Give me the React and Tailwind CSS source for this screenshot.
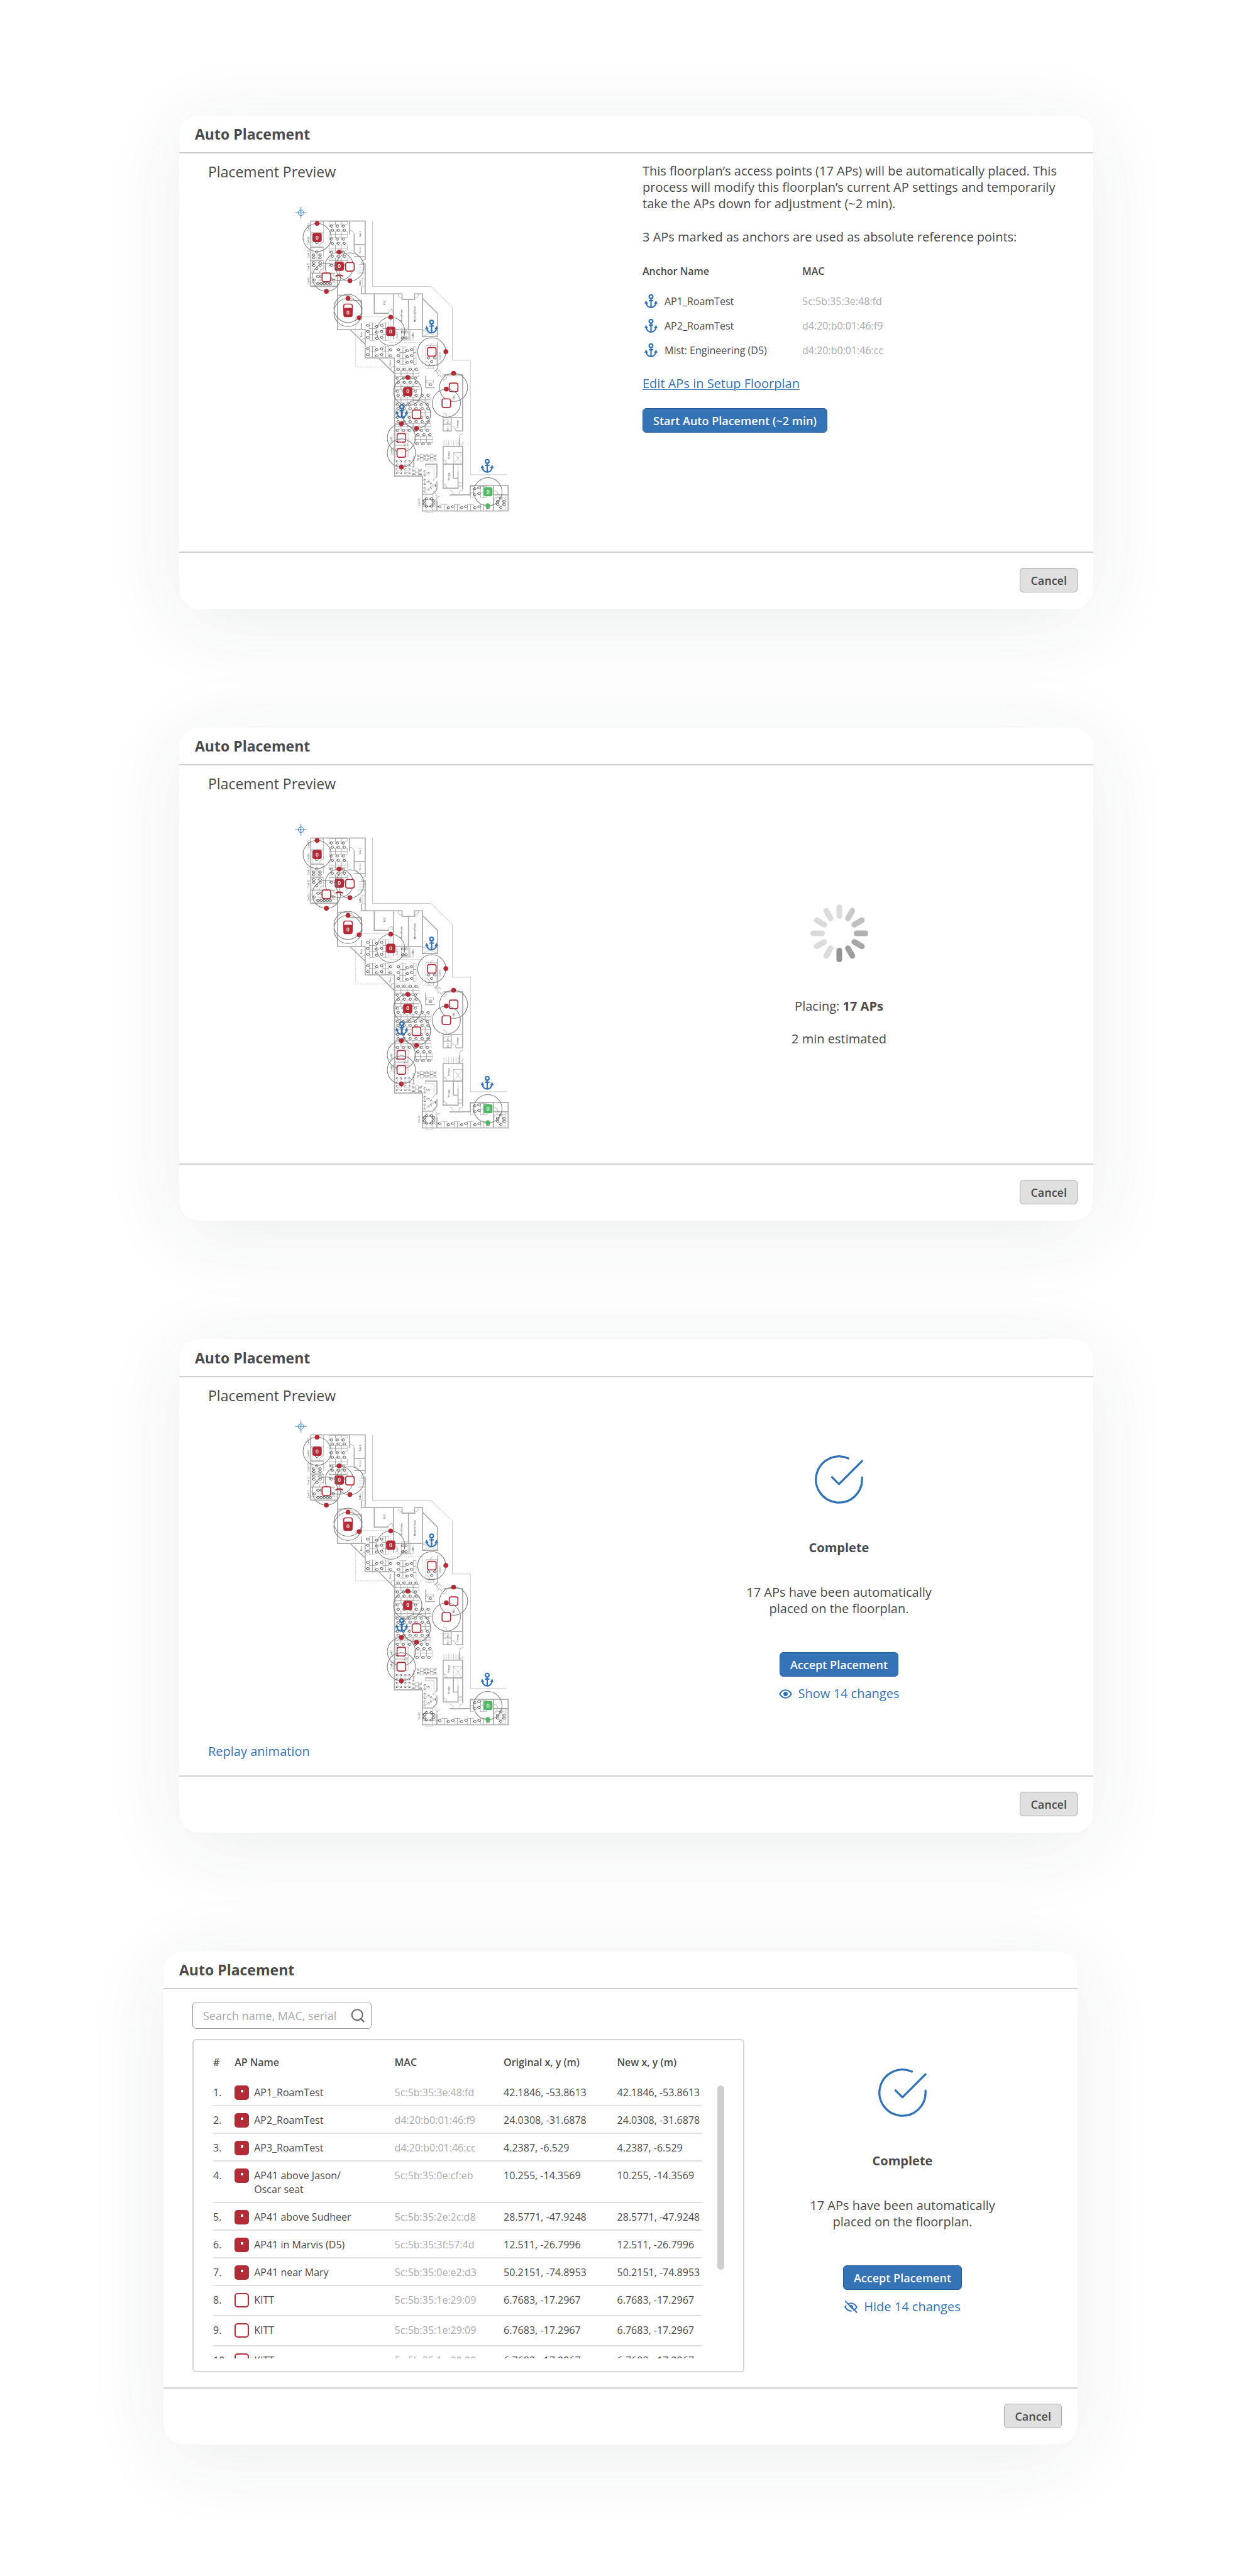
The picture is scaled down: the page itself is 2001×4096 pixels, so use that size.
import React from "react";

/* ------------------------------------------------------------------ */
/* Icons                                                               */
/* ------------------------------------------------------------------ */

function AnchorShape() {
  return (
    <g stroke="#3273b8" fill="none" strokeWidth="8">
      <circle cx="0" cy="-26" r="10.5" />
      <path d="M0 -15 V36 M-13 -3 H13" />
      <path d="M-28 10 C-26 26 -14 36 0 36 C14 36 26 26 28 10" />
      <path d="M-29 -5 L-38 14 H-17 Z M29 -5 L38 14 H17 Z" fill="#3273b8" stroke="none" />
    </g>
  );
}

function AnchorIcon() {
  return (
    <svg viewBox="-38 -40 76 80" className="h-[22px] w-[21px] shrink-0" aria-hidden="true">
      <AnchorShape />
    </svg>
  );
}

function CheckCircle() {
  return (
    <svg
      viewBox="1.5 1.5 21 21"
      className="size-[77px]"
      fill="none"
      stroke="#3273b8"
      strokeWidth="0.9"
      strokeLinecap="round"
      strokeLinejoin="round"
      aria-hidden="true"
    >
      <path d="M22 11.08V12a10 10 0 1 1-5.93-9.14" />
      <path d="M22 4 12 14.01l-3-3" />
    </svg>
  );
}

const EYE_PATH = "M1.4 9 C4.5 4 8.5 1.4 13 1.4 S21.5 4 24.6 9 C21.5 14 17.5 16.6 13 16.6 S4.5 14 1.4 9 Z";

function EyeIcon() {
  return (
    <svg viewBox="0 0 26 18" className="h-[15px] w-[21px]" fill="none" stroke="#3273b8" strokeWidth="2.5" aria-hidden="true">
      <path d={EYE_PATH} />
      <circle cx="13" cy="9" r="4.2" fill="#3273b8" stroke="none" />
    </svg>
  );
}

function EyeOffIcon() {
  return (
    <svg viewBox="0 0 26 25" className="h-[20px] w-[21px]" fill="none" stroke="#3273b8" strokeWidth="2.5" aria-hidden="true">
      <g transform="translate(0 4)">
        <path d={EYE_PATH} />
        <circle cx="13" cy="9" r="4.4" fill="#3273b8" stroke="none" />
      </g>
      <path d="M0 3.5 L22 26" stroke="#fff" strokeWidth="3" />
      <path d="M2 1.4 L24.6 23.6" strokeLinecap="round" />
    </svg>
  );
}

function SearchIcon() {
  return (
    <svg viewBox="0 0 27 27" className="size-[22px]" fill="none" stroke="#6b6b6b" strokeWidth="2.6" aria-hidden="true">
      <circle cx="12.5" cy="12" r="10.5" />
      <path d="M18.5 18.5 L26 26" strokeWidth="3" />
    </svg>
  );
}

const SPOKES = [
  "#dcdcdc", "#c9c9c9", "#bfbfbf", "#b0b0b0", "#a7a7a7", "#9e9e9e",
  "#949494", "#dcdcdc", "#dcdcdc", "#dadada", "#dadada", "#dcdcdc",
];

function Spinner() {
  return (
    <svg viewBox="-56 -56 112 112" className="size-[92px]" strokeWidth="11" strokeLinecap="round" role="img" aria-label="Placing access points">
      {SPOKES.map((color, i) => (
        <path key={i} d="M0 -50.5 V-33.5" stroke={color} transform={`rotate(${i * 30})`} />
      ))}
    </svg>
  );
}

/* ------------------------------------------------------------------ */
/* Floorplan drawing                                                   */
/* ------------------------------------------------------------------ */

const WALLS = [
  "M190 152 H507 V378 M507 398 V576 M485 398 H507 M190 152 V533 H346 M346 460 V785 H507 V950 H678 V1638 H840 V1841 H1340 V1693 H1120 V1747 H1000",
  "M485 535 V576 H722 V608 H795 V576 H841 V825 H929 V690 L841 603 M560 576 V690 H643 M673 576 V840 M759 610 V785 M673 785 H840",
  "M420 785 L507 870 M586 950 L678 1042 M346 585 H417 M417 615 H486 V720 M486 745 V782",
  "M416 152 V230 M443 228 V335 M443 290 H505 M443 360 H505 M190 304 H262 M190 380 H262 M190 456 H330",
  "M965 1048 H1075 V1375 M961 1298 H1075 M961 1298 V1375 H1008 V1298 M1035 1375 H1075 M961 1335 H1008",
  "M1057 1415 V1462 M961 1465 H1075 V1715 M961 1465 V1568 H1075 M961 1568 V1708 H1048 V1612 M1021 1568 V1650 H1048",
  "M1000 1747 H1075 M857 1568 H925 V1645 M925 1670 V1715 L900 1743 H840 M925 1780 V1841 M1255 1693 V1841 M1255 1747 H1340",
  "M930 855 V1010 L912 1028 M860 1053 V1123 H913",
];

const THIN = [
  "M550 152 V533 H890 L1015 656 V963 H1120 V1630 H1333",
  "M264 152 V275 M264 300 V360 M264 380 V440 M197 220 V300 M197 310 V370 M197 385 V450 M190 218 H262 M190 224 H262 M240 158 H264",
  "M190 380 H262 M226 340 V400 M205 380 H250 M186 456 V530 M190 510 H346 M186 483 H200 M190 527 H346",
  "M470 405 H505 M470 421 H505 M470 437 H505 M470 451 H505 M462 458 H505 M490 485 H505 V535 H490 Z",
  "M841 788 L929 824 M841 824 L929 788 M841 788 H929",
  "M718 775 H758 V845 H718 Z M765 785 H772 V845 H765 Z M690 846 H790 M860 878 H925 V990 H860 Z M860 995 H905 V1012 H860 Z M865 1080 H905 V1095 H865 Z M875 995 V1012 M890 995 V1012",
  "M1021 1500 H1075 V1568 H1021 Z M1021 1500 L1075 1568 M1075 1500 L1021 1568",
  "M966 1428 V1462 M980 1428 V1462 M994 1428 V1462 M1008 1428 V1462 M1022 1428 V1462 M1036 1428 V1462 M1050 1428 V1462",
  "M1050 1675 H1075 M1050 1683 H1075 M1050 1691 H1075 M1050 1699 H1075 M1048 1568 V1612",
  "M681 1388 H757 V1458 H681 Z M681 1458 H757 V1525 H681 Z M740 1388 V1440 M690 1475 H740 V1515 H690 Z M735 1450 H757 M735 1458 H757",
  "M857 1568 V1585 H908 V1640 M862 1745 V1850 H898 V1745 M845 1775 H915 V1815 H845 Z M915 1750 H925 V1820 H915",
  "M1325 1750 V1835 M1270 1765 H1325 M1280 1835 H1325 M670 1480 H690 M670 1465 V1520",
];

const DOORS = [
  "M420 207 a24 24 0 0 1 23 24 M264 275 a22 22 0 0 0 -22 22 M264 430 a22 22 0 0 0 -22 25 M507 378 a22 22 0 0 0 -22 20 M443 335 a22 22 0 0 1 20 22",
  "M643 690 a22 22 0 0 1 22 -22 V690 M700 580 a22 22 0 0 0 22 22 M818 580 a22 22 0 0 1 -22 22 M507 835 a22 22 0 0 0 -22 22 M678 998 a22 22 0 0 0 -22 22",
  "M319 456 a22 22 0 0 0 22 22 M417 590 a24 24 0 0 1 24 22 M905 862 a22 22 0 0 0 -18 20 M861 970 a22 22 0 0 1 22 22",
  "M915 1018 l12 18 q15 -32 18 -2 M938 1045 l14 18 q14 -30 18 0 M922 1038 q20 10 6 22 M961 1078 a22 22 0 0 0 22 -20 M961 1270 a22 22 0 0 1 22 22 M961 1328 a20 20 0 0 1 20 -20",
  "M1015 1350 a22 22 0 0 1 20 24 M1057 1412 a22 22 0 0 1 20 -22 M961 1545 a22 22 0 0 1 22 22 M961 1685 a22 22 0 0 1 22 22 M1000 1720 a24 24 0 0 1 20 24 M1053 1740 a22 22 0 0 1 22 -20",
  "M925 1645 a22 22 0 0 0 -22 22 M905 1730 l18 14 M920 1768 l20 -14 M1258 1722 a22 22 0 0 1 22 22 M1258 1780 a22 22 0 0 1 22 -22 M1057 1458 a22 22 0 0 0 20 -20 M735 1455 a22 22 0 0 0 22 22",
];

/* x, y, columns, rows, cell width, cell height */
const DESKS = [
  [298, 155, 3, 1, 35, 17], [298, 214, 3, 2, 35, 17], [298, 292, 3, 2, 35, 17], [298, 367, 3, 2, 35, 17],
  [532, 745, 2, 3, 17, 34], [610, 745, 2, 3, 17, 34], [532, 881, 2, 2, 17, 34], [610, 881, 2, 2, 17, 34],
  [709, 885, 2, 3, 18, 34], [787, 885, 1, 3, 17, 34],
  [681, 1024, 4, 2, 35, 17], [681, 1100, 4, 2, 35, 17], [681, 1177, 6, 2, 35, 17], [681, 1253, 6, 2, 35, 17],
  [681, 1331, 6, 2, 35, 17], [795, 1407, 3, 2, 35, 17],
  [950, 1804, 2, 1, 17, 36], [1026, 1804, 2, 1, 17, 36], [1103, 1804, 2, 1, 17, 36], [1180, 1804, 2, 1, 17, 36],
  [1120, 1697, 1, 2, 17, 34], [1180, 1697, 2, 2, 17, 34],
  [828, 1510, 1, 1, 17, 40], [886, 1510, 1, 1, 17, 40], [800, 1595, 1, 1, 17, 40],
];

/* first x, y, count, step */
const CHAIR_ROWS = [
  [310, 182, 3, 35], [316, 205, 3, 35], [310, 258, 3, 35], [316, 282, 3, 35], [310, 334, 3, 35], [316, 358, 3, 35], [310, 410, 3, 35],
  [233, 475, 2, 18], [233, 517, 5, 18], [211, 496, 1, 0], [322, 496, 1, 0],
  [208, 350, 2, 37], [208, 367, 2, 37], [208, 394, 2, 37], [208, 411, 2, 37], [226, 332, 1, 0], [226, 430, 1, 0], [226, 278, 1, 0],
  [523, 760, 2, 80], [523, 795, 2, 80], [523, 830, 2, 80], [575, 766, 1, 0], [575, 800, 1, 0], [575, 835, 1, 0],
  [523, 896, 2, 80], [523, 931, 2, 80], [575, 902, 2, 80], [575, 937, 2, 80],
  [701, 902, 2, 77], [701, 936, 2, 77], [701, 971, 2, 77], [753, 907, 1, 0], [753, 942, 1, 0], [753, 976, 1, 0],
  [727, 798, 2, 18], [727, 833, 2, 18], [877, 950, 2, 36], [895, 971, 1, 0], [888, 1106, 1, 0],
  [700, 1015, 4, 35], [695, 1068, 4, 35], [700, 1091, 4, 35], [695, 1144, 4, 35], [700, 1168, 6, 35], [695, 1221, 6, 35],
  [700, 1244, 6, 35], [695, 1297, 6, 35], [700, 1320, 6, 35], [695, 1373, 6, 35], [815, 1397, 3, 35], [810, 1450, 3, 35],
  [941, 1816, 4, 77], [993, 1822, 4, 77], [1146, 1712, 1, 0], [1171, 1706, 1, 0], [1146, 1746, 1, 0], [1171, 1740, 1, 0],
  [1298, 1765, 1, 0], [1298, 1820, 1, 0], [1280, 1785, 2, 36], [1280, 1802, 2, 36],
  [697, 1437, 2, 34],
  [865, 1770, 2, 28], [853, 1782, 2, 52], [853, 1800, 2, 52], [865, 1813, 2, 28],
];

const CHAIRS = CHAIR_ROWS.flatMap(([x, y, n, step]) => Array.from({ length: n }, (_, i) => [x + i * step, y]));
const BREAK_TABLES = [[703, 1564], [753, 1564], [703, 1610], [753, 1610]];
const LOUNGE_TABLES = [[863, 1622], [863, 1672], [900, 1693], [863, 1717]];
const SIDE_CHAIRS = [[836, 1530], [894, 1530], [808, 1615]];

const ROOM_LABELS = [
  [175, 190, "Conf 15"], [175, 266, "Conf 14"], [175, 342, "Conf 13"], [175, 418, "Conf 12"], [175, 498, "Conf 11"],
  [476, 228, "Lab 1"], [476, 320, "Server"], [476, 513, "Coffee"], [619, 627, "NOC"], [719, 703, "Mens Room"],
  [795, 695, "Womens Room"], [485, 814, "Patio"], [652, 978, "Patio"], [692, 817, "Conf 7"], [786, 818, "Coffee"],
  [943, 938, "Conf 6"], [1021, 1178, "EBC"], [991, 1318, "Ph 2"], [991, 1358, "Ph 1"], [1046, 1335, "Storage"],
  [995, 1515, "Storage"], [995, 1640, "Storage"], [660, 1427, "Conf 5"], [660, 1497, "Conf 4"], [790, 1555, "Break Area"],
  [820, 1790, "Conf 3"],
];

/* kind, x, y, beam dot x, beam dot y */
const ACCESS_POINTS = [
  ["off", 227, 248, 227, 166],
  ["off", 356, 416, 356, 333],
  ["none", 418, 419, 418, 500],
  ["none", 281, 480, 281, 562],
  ["none", 407, 661, 472, 716],
  ["off", 407, 685, 407, 603],
  ["off", 656, 795, 656, 712],
  ["none", 895, 914, 977, 913],
  ["none", 1022, 1121, 1022, 1039],
  ["none", 980, 1213, 980, 1131],
  ["off", 755, 1145, 755, 1063],
  ["none", 806, 1278, 806, 1360],
  ["none", 718, 1415, 718, 1333],
  ["none", 718, 1503, 718, 1585],
  ["on", 1222, 1729, 1222, 1810],
];

const MAP_ANCHORS = [[894, 767], [720, 1260], [1218, 1578]];

function AccessPoint({ kind, x, y, dx, dy }) {
  const color = kind === "on" ? "#56b866" : "#b42b38";
  return (
    <g>
      <circle cx={x} cy={y} r="82" fill="none" stroke="#7c7c7c" strokeWidth="3.8" />
      {kind === "none" ? (
        <rect x={x - 25} y={y - 25} width="50" height="50" rx="11" fill="#fff" stroke={color} strokeWidth="6" />
      ) : (
        <g>
          <rect x={x - 27} y={y - 27} width="54" height="54" rx="13" fill={color} />
          <text x={x} y={y + 11} fontSize="31" fontWeight="600" textAnchor="middle" fill="#fff">0</text>
        </g>
      )}
      <circle cx={dx} cy={dy} r="14" fill={color} />
    </g>
  );
}

function Floorplan() {
  return (
    <svg viewBox="90 30 1260 1860" className="h-[508px] w-[344px]" role="img" aria-label="Floorplan with access points">
      <g fill="none">
        <g stroke="#8c8c8c" strokeWidth="1.8">
          {THIN.map((d) => <path key={d} d={d} />)}
          {DESKS.map(([x, y, cols, rows, w, h]) => (
            <g key={`${x}-${y}`}>
              {Array.from({ length: cols * rows }, (_, i) => (
                <rect key={i} x={x + (i % cols) * w} y={y + Math.floor(i / cols) * h} width={w} height={h} />
              ))}
            </g>
          ))}
          {DOORS.map((d) => <path key={d} d={d} stroke="#5f5f5f" />)}
        </g>
        <g stroke="#979797" strokeWidth="5.5">
          {WALLS.map((d) => <path key={d} d={d} />)}
        </g>
        <g stroke="#cfcfcf" strokeWidth="1.6">
          {WALLS.map((d) => <path key={d} d={d} />)}
        </g>
        <path d="M452 710 H657 V860 H841 V1003 H452 Z" stroke="#9a9a9a" strokeWidth="2" strokeDasharray="8 5" />
        <g stroke="#2f2f2f" strokeWidth="2.6">
          {CHAIRS.map(([x, y]) => (
            <path key={`${x}-${y}`} d={`M${x - 5} ${y - 6} h9 l4 6 l-4 6 h-8 l-3 -6 Z M${x - 9} ${y - 4} v8`} />
          ))}
        </g>
        <g stroke="#444" strokeWidth="2">
          <path d="M233 496 H262 M226 348 h1 M226 364 h1 M284 1793 h1" />
          {BREAK_TABLES.map(([x, y]) => (
            <g key={`${x}-${y}`}>
              <rect x={x - 8} y={y - 8} width="16" height="16" stroke="#999" />
              <path d={`M${x - 15} ${y - 6} V${y - 15} H${x - 6} M${x + 6} ${y - 15} H${x + 15} V${y - 6} M${x - 15} ${y + 6} V${y + 15} H${x - 6} M${x + 6} ${y + 15} H${x + 15} V${y + 6}`} strokeWidth="3" />
            </g>
          ))}
          {LOUNGE_TABLES.map(([x, y]) => (
            <g key={`${x}-${y}`}>
              <path d={`M${x - 10} ${y - 10} L${x + 12} ${y} L${x - 10} ${y + 10} Z`} stroke="#888" />
              <path d={`M${x - 16} ${y - 8} l4 -7 h8 M${x - 16} ${y + 8} l4 7 h8 M${x + 16} ${y - 7} v14 M${x + 11} ${y - 4} h6`} strokeWidth="2.6" />
            </g>
          ))}
          {SIDE_CHAIRS.map(([x, y]) => (
            <path
              key={`${x}-${y}`}
              d={`M${x - 12} ${y - 13} h-15 v-6 M${x - 12} ${y - 7} h-15 M${x - 12} ${y + 13} h-15 v6 M${x - 12} ${y + 7} h-15 M${x + 12} ${y - 13} h15 v-6 M${x + 12} ${y - 7} h15 M${x + 12} ${y + 13} h15 v6 M${x + 12} ${y + 7} h15 M${x - 9} ${y} h18`}
              strokeWidth="2.4"
            />
          ))}
          <ellipse cx="1298" cy="1793" rx="13" ry="22" stroke="#888" />
        </g>
        <g stroke="#3c7fc4" strokeWidth="3.6">
          <circle cx="133" cy="104" r="16" />
          <path d="M133 70 V138 M99 104 H167" />
        </g>
      </g>

      <g fill="#3a3a3a" fontSize="13.5" textAnchor="middle" className="font-['Liberation_Sans',sans-serif]">
        {ROOM_LABELS.map(([x, y, label]) => (
          <text key={`${x}-${y}`} transform={`translate(${x + 5} ${y}) rotate(-90)`}>{label}</text>
        ))}
      </g>

      {ACCESS_POINTS.map(([kind, x, y, dx, dy]) => (
        <AccessPoint key={`${x}-${y}`} kind={kind} x={x} y={y} dx={dx} dy={dy} />
      ))}
      <path d="M335 473 Q356 463 378 473" fill="none" stroke="#b42b38" strokeWidth="8" />

      {MAP_ANCHORS.map(([x, y]) => (
        <g key={`${x}-${y}`} transform={`translate(${x} ${y})`}>
          <AnchorShape />
        </g>
      ))}
    </svg>
  );
}

/* ------------------------------------------------------------------ */
/* Shared pieces                                                       */
/* ------------------------------------------------------------------ */

function Dialog({ className = "", columns = "grid-cols-[737fr_717fr]", children }) {
  return (
    <section className={`flex flex-col rounded-[32px] bg-white shadow-[0_20px_128px_rgba(30,50,60,0.09)] ${className}`}>
      <header className="flex h-[60px] items-center border-b-2 border-[#cfcfcf] px-[25px]">
        <h1 className="text-[23px] leading-8 font-bold">Auto Placement</h1>
      </header>
      <div className={`grid min-h-[633px] ${columns}`}>{children}</div>
      <footer className="flex justify-end border-t-2 border-[#cfcfcf] px-[25px] pt-6 pb-[26px]">
        <button type="button" className="h-[39px] rounded-md border border-[#aaaaaa] bg-[#e0e0e0] px-4 text-[18px] leading-6 font-semibold">
          Cancel
        </button>
      </footer>
    </section>
  );
}

function Preview({ gap, children }) {
  return (
    <div className="flex flex-col items-start pt-[13px] pb-[25px] pl-[46px]">
      <h2 className="text-[23px] leading-8">Placement Preview</h2>
      <div className={`pl-[136px] ${gap}`}>
        <Floorplan />
      </div>
      {children}
    </div>
  );
}

function PrimaryButton({ children }) {
  return (
    <button type="button" className="h-[39px] rounded-md border border-[#245c97] bg-[#3573b7] px-4 text-[18px] leading-6 font-semibold text-white">
      {children}
    </button>
  );
}

function CompleteStatus({ className, icon, toggle }) {
  return (
    <div className={`flex flex-col items-center text-center text-[20px] leading-[26px] ${className}`}>
      <CheckCircle />
      <h2 className="mt-[57px] font-bold">Complete</h2>
      <p className="mt-[45px] mb-14">
        17 APs have been automatically
        <br />
        placed on the floorplan.
      </p>
      <PrimaryButton>Accept Placement</PrimaryButton>
      <button type="button" className="mt-[14px] flex items-center gap-[10px] text-[#3273b8]">
        {icon}
        {toggle}
      </button>
    </div>
  );
}

/* ------------------------------------------------------------------ */
/* Dialog bodies                                                       */
/* ------------------------------------------------------------------ */

const ANCHORS = [
  ["AP1_RoamTest", "5c:5b:35:3e:48:fd"],
  ["AP2_RoamTest", "d4:20:b0:01:46:f9"],
  ["Mist: Engineering (D5)", "d4:20:b0:01:46:cc"],
];

function StartPanel() {
  return (
    <div className="flex flex-col items-start pt-[15px] pr-[52px] text-[20px] leading-[26px]">
      <p>
        This floorplan’s access points (17 APs) will be automatically placed. This process will modify this floorplan’s
        current AP settings and temporarily take the APs down for adjustment (~2 min).
      </p>
      <p className="mt-[27px]">3 APs marked as anchors are used as absolute reference points:</p>
      <table className="mt-[30px] text-left text-[16px] leading-[22px]">
        <thead>
          <tr>
            <th scope="col" className="w-[254px] pb-[17px] font-semibold">Anchor Name</th>
            <th scope="col" className="pb-[17px] font-semibold">MAC</th>
          </tr>
        </thead>
        <tbody>
          {ANCHORS.map(([name, mac]) => (
            <tr key={mac} className="h-[39px]">
              <td>
                <span className="flex items-center gap-[11px] pl-[3px]">
                  <AnchorIcon />
                  {name}
                </span>
              </td>
              <td className="text-[#aaaaaa]">{mac}</td>
            </tr>
          ))}
        </tbody>
      </table>
      <a href="#setup" className="mt-[21px] mb-[26px] text-[#3273b8] underline decoration-1 underline-offset-2">
        Edit APs in Setup Floorplan
      </a>
      <PrimaryButton>Start Auto Placement (~2 min)</PrimaryButton>
    </div>
  );
}

function PlacingPanel() {
  return (
    <div className="flex flex-col items-center pt-[221px] pr-[92px] text-[20px] leading-[26px]">
      <Spinner />
      <p className="mt-[57px]">
        Placing: <strong className="font-bold">17 APs</strong>
      </p>
      <p className="mt-[26px]">2 min estimated</p>
    </div>
  );
}

const CHANGES = [
  { name: "AP1_RoamTest", mac: "5c:5b:35:3e:48:fd", from: "42.1846, -53.8613", to: "42.1846, -53.8613", placed: true },
  { name: "AP2_RoamTest", mac: "d4:20:b0:01:46:f9", from: "24.0308, -31.6878", to: "24.0308, -31.6878", placed: true },
  { name: "AP3_RoamTest", mac: "d4:20:b0:01:46:cc", from: "4.2387, -6.529", to: "4.2387, -6.529", placed: true },
  { name: "AP41 above Jason/ Oscar seat", mac: "5c:5b:35:0e:cf:eb", from: "10.255, -14.3569", to: "10.255, -14.3569", placed: true },
  { name: "AP41 above Sudheer", mac: "5c:5b:35:2e:2c:d8", from: "28.5771, -47.9248", to: "28.5771, -47.9248", placed: true },
  { name: "AP41 in Marvis (D5)", mac: "5c:5b:35:3f:57:4d", from: "12.511, -26.7996", to: "12.511, -26.7996", placed: true },
  { name: "AP41 near Mary", mac: "5c:5b:35:0e:e2:d3", from: "50.2151, -74.8953", to: "50.2151, -74.8953", placed: true },
  { name: "KITT", mac: "5c:5b:35:1e:29:09", from: "6.7683, -17.2967", to: "6.7683, -17.2967", placed: false },
  { name: "KITT", mac: "5c:5b:35:1e:29:09", from: "6.7683, -17.2967", to: "6.7683, -17.2967", placed: false },
  { name: "KITT", mac: "5c:5b:35:1e:29:09", from: "6.7683, -17.2967", to: "6.7683, -17.2967", placed: false },
];

function StatusBadge({ placed }) {
  return placed ? (
    <span className="flex size-[23px] shrink-0 justify-center rounded-[5px] bg-[#b42b38] pt-[7px]">
      <span className="size-1 rounded-[1px] bg-white" />
    </span>
  ) : (
    <span className="size-[23px] shrink-0 rounded-[5px] border-2 border-[#b42b38] bg-white" />
  );
}

function ChangesPanel() {
  return (
    <div className="flex flex-col pt-5 pb-6 pl-[46px]">
      <form className="flex h-[43px] w-[285px] items-center rounded-md border border-[#999999] pr-[10px] pl-4">
        <input
          type="search"
          aria-label="Search name, MAC, serial"
          placeholder="Search name, MAC, serial"
          className="min-w-0 flex-1 bg-transparent text-[18px] leading-6 outline-none placeholder:text-[#aaaaaa]"
        />
        <button type="button" aria-label="Search">
          <SearchIcon />
        </button>
      </form>
      <div className="mt-4 flex rounded-md border-2 border-[#d4d4d4] pr-[30px] pb-5 pl-[31px]">
        <div className="h-[506px] flex-1 overflow-hidden">
          <table className="w-full table-fixed text-left text-[16px] leading-[22px]">
            <thead>
              <tr className="align-top [&>th]:pt-6 [&>th]:pb-[15px] [&>th]:font-semibold">
                <th scope="col" className="w-[4.4%]">#</th>
                <th scope="col" className="w-[32.7%]">AP Name</th>
                <th scope="col" className="w-[22.3%]">MAC</th>
                <th scope="col" className="w-[23.2%]">Original x, y (m)</th>
                <th scope="col" className="whitespace-nowrap">New x, y (m)</th>
              </tr>
            </thead>
            <tbody>
              {CHANGES.map((row, i) => (
                <tr
                  key={i}
                  className={`border-b-2 border-[#e0e0e0] align-top [&>td]:pt-[11px] ${row.placed ? "[&>td]:pb-[9px]" : "[&>td]:pb-[13px]"}`}
                >
                  <td className="whitespace-nowrap">{i + 1}.</td>
                  <td>
                    <span className="flex items-start gap-2">
                      <span className="-mb-px flex">
                        <StatusBadge placed={row.placed} />
                      </span>
                      <span className="max-w-[168px]">{row.name}</span>
                    </span>
                  </td>
                  <td className="text-[#aaaaaa]">{row.mac}</td>
                  <td>{row.from}</td>
                  <td className="whitespace-nowrap">{row.to}</td>
                </tr>
              ))}
            </tbody>
          </table>
        </div>
        <div className="mt-[72px] ml-6 h-[293px] w-[11px] rounded-full bg-[#cfcfcf]" />
      </div>
    </div>
  );
}

export default function App() {
  return (
    <main className="flex min-h-screen flex-col gap-[189px] overflow-hidden bg-white pt-[184px] pr-[262px] pb-[209px] pl-[285px] font-['Open_Sans',sans-serif] text-[#4a4a4a]">
      <Dialog>
        <Preview gap="mt-[29px]" />
        <StartPanel />
      </Dialog>

      <Dialog>
        <Preview gap="mt-[37px]" />
        <PlacingPanel />
      </Dialog>

      <Dialog>
        <Preview gap="mt-[13px]">
          <a href="#replay" className="mt-auto text-[20px] leading-[26px] text-[#3273b8]">
            Replay animation
          </a>
        </Preview>
        <CompleteStatus className="pt-[124px] pr-[92px]" icon={<EyeIcon />} toggle="Show 14 changes" />
      </Dialog>

      <Dialog className="mr-[25px] -ml-[25px]" columns="grid-cols-[924fr_530fr]">
        <ChangesPanel />
        <CompleteStatus className="pt-[126px] pr-[27px]" icon={<EyeOffIcon />} toggle="Hide 14 changes" />
      </Dialog>
    </main>
  );
}
